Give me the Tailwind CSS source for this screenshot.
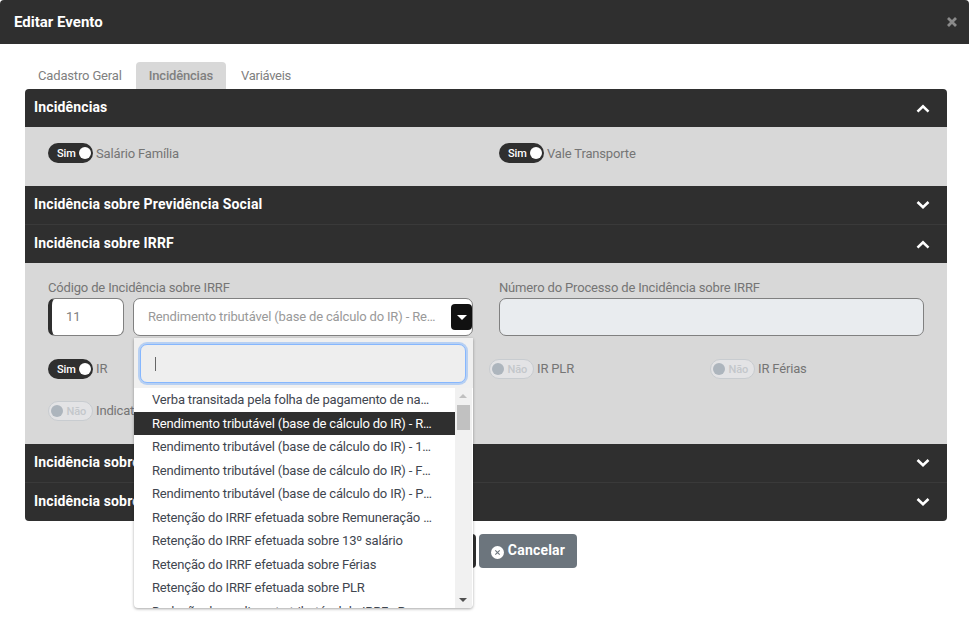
<!DOCTYPE html>
<html lang="pt-BR">
<head>
    <meta charset="UTF-8">
    <title>Editar Evento</title>
    <script src="https://cdn.jsdelivr.net/npm/@tailwindcss/browser@4"></script>
</head>
<body class="bg-white font-[Roboto,sans-serif] text-[13px] tracking-[-0.16px] text-[#6c757d] w-[969px] h-[629px] overflow-hidden">
    <header class="h-[44px] bg-[#2f2f2f] rounded-t-[4px] flex items-center justify-between pl-[14px] pr-[11px]">
        <h1 class="text-[15px] tracking-normal font-bold text-white">Editar Evento</h1>
        <svg class="w-[12px] h-[12px]" viewBox="0 0 12 12"><path d="M2 2l8 8M10 2l-8 8" stroke="#8a8a8a" stroke-width="2.8"/></svg>
    </header>

    <nav class="flex pl-[25px] pt-[18px] h-[45px]">
        <span class="h-[27px] pl-[13px] pr-[14px] flex items-center text-[#808080]">Cadastro Geral</span>
        <span class="h-[27px] px-[13px] flex items-center bg-[#d8d8d8] rounded-t-[4px] font-medium tracking-[-0.18px] text-[#808080]">Incidências</span>
        <span class="h-[27px] px-[15px] flex items-center tracking-[-0.3px] text-[#808080]">Variáveis</span>
    </nav>

    <main class="relative mx-[25px] w-[922px]">
        <section class="rounded-[4px] overflow-hidden">
            <div class="h-[38px] bg-[#2f2f2f] flex items-center justify-between pl-[9px] pr-[17px] text-[14px] tracking-[0.14px] font-bold text-white">
                <span class="pb-[2px]">Incidências</span>
                <svg class="w-[14px] h-[10px]" viewBox="0 0 14 10"><path d="M1.5 8.600L7 3.400 12.500 8.600" fill="none" stroke="#fff" stroke-width="2.6"/></svg>
            </div>
            <div class="h-[59px] bg-[#d8d8d8] grid grid-cols-[451px_1fr] pl-[23px] pt-[16px] text-[#757575]">
                <div class="flex items-start gap-[3px]">
                    <span class="w-[45px] h-[20px] rounded-full bg-[#2f2f2f] flex items-center justify-between pl-[9px] pr-[2px] text-[11px] font-medium text-white"><span class="pt-[2px]">Sim</span><span class="w-[12px] h-[12px] rounded-full bg-white"></span></span>
                    <span class="leading-[22px]">Salário Família</span>
                </div>
                <div class="flex items-start gap-[3px]">
                    <span class="w-[45px] h-[20px] rounded-full bg-[#2f2f2f] flex items-center justify-between pl-[9px] pr-[2px] text-[11px] font-medium text-white"><span class="pt-[2px]">Sim</span><span class="w-[12px] h-[12px] rounded-full bg-white"></span></span>
                    <span class="leading-[22px]">Vale Transporte</span>
                </div>
            </div>
            <div class="h-[39px] bg-[#2f2f2f] border-b border-[#3a3a3a] flex items-center justify-between pl-[9px] pr-[17px] text-[14px] tracking-[0.14px] font-bold text-white">
                <span class="pb-[2px]">Incidência sobre Previdência Social</span>
                <svg class="w-[14px] h-[10px]" viewBox="0 0 14 10"><path d="M1.5 2L7 7.200 12.500 2" fill="none" stroke="#fff" stroke-width="2.6"/></svg>
            </div>
            <div class="h-[38px] bg-[#2f2f2f] flex items-center justify-between pl-[9px] pr-[17px] text-[14px] tracking-[0.14px] font-bold text-white">
                <span class="pb-[2px]">Incidência sobre IRRF</span>
                <svg class="w-[14px] h-[10px]" viewBox="0 0 14 10"><path d="M1.5 8.600L7 3.400 12.500 8.600" fill="none" stroke="#fff" stroke-width="2.6"/></svg>
            </div>
            <div class="h-[181px] bg-[#d8d8d8] pl-[23px] pr-[23px] pt-[16px] text-[#757575]">
                <div class="grid grid-cols-[451px_425px]">
                    <div>
                        <label class="block h-[19px] leading-[18px]">Código de Incidência sobre IRRF</label>
                        <div class="flex gap-[9px]">
                            <div class="w-[76px] h-[38px] bg-white rounded-[7px] border border-[#808080] border-l-[4px] border-l-[#2f2f2f] flex items-center pl-[14px] text-[#808080]">11</div>
                            <div class="w-[340px] h-[38px] bg-white rounded-[7px] border border-[#808080] flex items-center justify-between pl-[14px] text-[#999]">
                                <span class="w-[293px] truncate">Rendimento tributável (base de cálculo do IR) - Remuneração</span>
                                <span class="w-[21px] h-[26px] bg-[#111] rounded-[4px] flex items-center justify-center"><span class="border-x-[5px] border-x-transparent border-t-[5px] border-t-white"></span></span>
                            </div>
                        </div>
                    </div>
                    <div>
                        <label class="block h-[19px] leading-[18px]">Número do Processo de Incidência sobre IRRF</label>
                        <div class="h-[38px] bg-[#e9ecef] rounded-[7px] border border-[#808080]"></div>
                    </div>
                </div>
                <div class="grid grid-cols-[441px_221px_200px] mt-[23px]">
                    <div class="flex items-start gap-[3px]">
                        <span class="w-[45px] h-[20px] rounded-full bg-[#2f2f2f] flex items-center justify-between pl-[9px] pr-[2px] text-[11px] font-medium text-white"><span class="pt-[2px]">Sim</span><span class="w-[12px] h-[12px] rounded-full bg-white"></span></span>
                        <span class="leading-[20px]">IR</span>
                    </div>
                    <div class="flex items-start gap-[3px]">
                        <span class="w-[45px] h-[20px] rounded-full border border-[#c8ccd0] bg-[#e3e3e5] flex items-center justify-between pl-[2px] pr-[6px] text-[11px] font-medium text-[#c3c7cb]"><span class="w-[12px] h-[12px] rounded-full bg-[#adb5bd]"></span><span class="pt-[2px]">Não</span></span>
                        <span class="leading-[20px]">IR PLR</span>
                    </div>
                    <div class="flex items-start gap-[3px]">
                        <span class="w-[45px] h-[20px] rounded-full border border-[#c8ccd0] bg-[#e3e3e5] flex items-center justify-between pl-[2px] pr-[6px] text-[11px] font-medium text-[#c3c7cb]"><span class="w-[12px] h-[12px] rounded-full bg-[#adb5bd]"></span><span class="pt-[2px]">Não</span></span>
                        <span class="leading-[20px]">IR Férias</span>
                    </div>
                </div>
                <div class="flex items-start gap-[3px] mt-[22px]">
                    <span class="w-[45px] h-[20px] rounded-full border border-[#c8ccd0] bg-[#e3e3e5] flex items-center justify-between pl-[2px] pr-[6px] text-[11px] font-medium text-[#c3c7cb]"><span class="w-[12px] h-[12px] rounded-full bg-[#adb5bd]"></span><span class="pt-[2px]">Não</span></span>
                    <span class="leading-[20px]">Indicativo</span>
                </div>
            </div>
            <div class="h-[39px] bg-[#2f2f2f] border-b border-[#3a3a3a] flex items-center justify-between pl-[9px] pr-[17px] text-[14px] tracking-[0.14px] font-bold text-white">
                <span class="pb-[2px]">Incidência sobre FGTS</span>
                <svg class="w-[14px] h-[10px]" viewBox="0 0 14 10"><path d="M1.5 2L7 7.200 12.500 2" fill="none" stroke="#fff" stroke-width="2.6"/></svg>
            </div>
            <div class="h-[38px] bg-[#2f2f2f] flex items-center justify-between pl-[9px] pr-[17px] text-[14px] tracking-[0.14px] font-bold text-white">
                <span class="pb-[2px]">Incidência sobre Sindical</span>
                <svg class="w-[14px] h-[10px]" viewBox="0 0 14 10"><path d="M1.5 2L7 7.200 12.500 2" fill="none" stroke="#fff" stroke-width="2.6"/></svg>
            </div>
        </section>

        <div class="flex justify-end gap-[3px] mt-[13px] w-[552px]">
            <button class="w-[100px] h-[34px] bg-[#2f2f2f] rounded-[4px] text-[14px] font-bold text-white">Salvar</button>
            <button class="w-[98px] h-[34px] bg-[#6c757d] rounded-[4px] flex items-center justify-center gap-[4px] pb-[2px] text-[14px] tracking-[0.2px] font-bold text-white">
                <svg class="w-[13px] h-[13px] mt-[4px]" viewBox="0 0 13 13"><circle cx="6.5" cy="6.5" r="6.5" fill="#fff"/><path d="M4.300 4.300l4.400 4.400M8.700 4.300l-4.400 4.400" stroke="#6c757d" stroke-width="1.100"/></svg>
                Cancelar
            </button>
        </div>

        <!-- dropdown aberto, fica por cima do painel -->
        <div class="absolute left-[109px] top-[249px] w-[339px] h-[270px] bg-white rounded-b-[4px] shadow-[0_1px_3px_rgba(0,0,0,0.35)] overflow-hidden">
            <div class="h-[50px] bg-[#f0f0f0] px-[6px] pt-[6px]">
                <div class="h-[39px] w-[326px] bg-[#eeeeee] rounded-[7px] border border-[#86b7fe] shadow-[0_0_0_2px_rgba(13,110,253,0.25)] flex items-center pl-[14px]">
                    <span class="w-px h-[14px] bg-[#666]"></span>
                </div>
            </div>
            <div class="flex h-[220px]">
                <ul class="w-[321px] text-[#3f4650] text-[13px] tracking-[-0.18px]">
                    <li class="h-[23.5px] pl-[18px] pr-[23px] leading-[23px] truncate">Verba transitada pela folha de pagamento de natureza</li>
                    <li class="h-[23.5px] pl-[18px] pr-[23px] leading-[23px] truncate bg-[#2f2f2f] text-white">Rendimento tributável (base de cálculo do IR) - Remuneração</li>
                    <li class="h-[23.5px] pl-[18px] pr-[23px] leading-[23px] truncate">Rendimento tributável (base de cálculo do IR) - 13º salário</li>
                    <li class="h-[23.5px] pl-[18px] pr-[23px] leading-[23px] truncate">Rendimento tributável (base de cálculo do IR) - Férias pagas</li>
                    <li class="h-[23.5px] pl-[18px] pr-[23px] leading-[23px] truncate">Rendimento tributável (base de cálculo do IR) - PLR pagos</li>
                    <li class="h-[23.5px] pl-[18px] pr-[23px] leading-[23px] truncate">Retenção do IRRF efetuada sobre Remuneração mensal</li>
                    <li class="h-[23.5px] pl-[18px] pr-[23px] leading-[23px] truncate">Retenção do IRRF efetuada sobre 13º salário</li>
                    <li class="h-[23.5px] pl-[18px] pr-[23px] leading-[23px] truncate">Retenção do IRRF efetuada sobre Férias</li>
                    <li class="h-[23.5px] pl-[18px] pr-[23px] leading-[23px] truncate">Retenção do IRRF efetuada sobre PLR</li>
                    <li class="h-[23.5px] pl-[18px] pr-[23px] leading-[23px] truncate">Dedução do rendimento tributável do IRRF - Remuneração</li>
                </ul>
                <div class="w-[17px] bg-[#f1f1f1] relative">
                    <span class="absolute left-[4px] top-[6px] border-x-[4px] border-x-transparent border-b-[4px] border-b-[#c0c0c0]"></span>
                    <span class="absolute left-[2px] top-[17px] w-[13px] h-[25px] bg-[#c1c1c1]"></span>
                    <span class="absolute left-[4px] bottom-[6px] border-x-[4px] border-x-transparent border-t-[4px] border-t-[#505050]"></span>
                </div>
            </div>
        </div>
    </main>
</body>
</html>
